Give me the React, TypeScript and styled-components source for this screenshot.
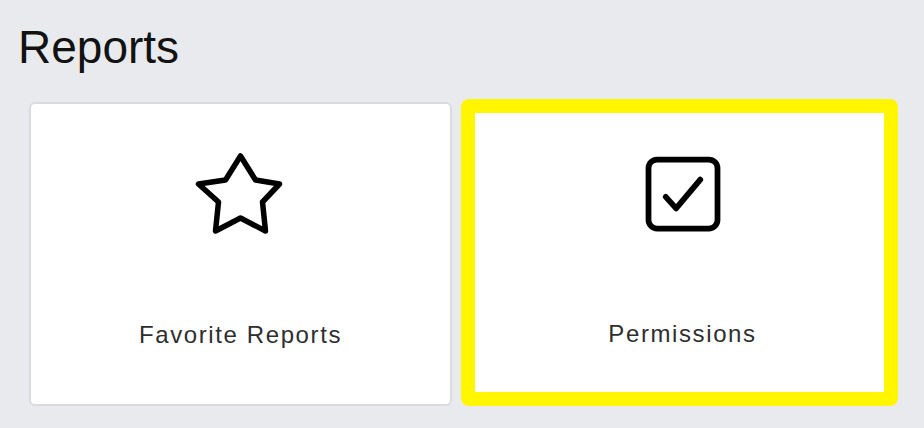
import React from "react";
import styled, { createGlobalStyle } from "styled-components";

const GlobalStyle = createGlobalStyle`
  html, body {
    margin: 0;
    padding: 0;
    background: #e9eaee;
    font-family: "Liberation Sans", Arial, Helvetica, sans-serif;
  }
  * { box-sizing: border-box; }
`;

const Page = styled.div`
  width: 924px;
  height: 428px;
  overflow: hidden;
  background: #e9eaee;
  padding: 21px 0 0 18px;
`;

const Title = styled.h1`
  margin: 0;
  font-size: 46px;
  line-height: 53px;
  font-weight: 400;
  color: #121212;
`;

const CardGrid = styled.div`
  display: grid;
  grid-template-columns: 423px 437px;
  column-gap: 9px;
  align-items: end;
  margin: 25px 0 0 11px;
`;

const Card = styled.button<{ $selected?: boolean }>`
  display: flex;
  flex-direction: column;
  align-items: center;
  background: #ffffff;
  border: ${(p) => (p.$selected ? "14px solid #fff600" : "2px solid #dbdbde")};
  border-radius: ${(p) => (p.$selected ? "8px" : "6px")};
  height: ${(p) => (p.$selected ? "307px" : "304px")};
  padding: ${(p) => (p.$selected ? "35px 0 0 6px" : "45px 0 0 0")};
  margin: 0;
  font: inherit;
  cursor: pointer;
`;

const IconBox = styled.svg<{ $shift?: number }>`
  width: 92px;
  height: 92px;
  display: block;
  flex: none;
  fill: none;
  stroke: #000;
  margin-left: ${(p) => p.$shift ?? 0}px;
`;

const Label = styled.span`
  margin-top: 80px;
  font-size: 24px;
  line-height: 28px;
  letter-spacing: 1.6px;
  color: #2e2e2e;
`;

const StarIcon = () => (
  <IconBox viewBox="0 0 92 92">
    <path
      d="M45.5 7L60.5 31L84.5 35L67.5 53L70.5 82L45.5 69L20.5 82L23.5 53L3.5 35L30.5 31Z"
      strokeWidth={5.5}
      strokeLinejoin="round"
    />
  </IconBox>
);

const CheckboxIcon = () => (
  <IconBox viewBox="0 0 512 512" $shift={1}>
    <path
      d="M352 176L217.6 336 160 272"
      strokeWidth={32}
      strokeLinecap="round"
      strokeLinejoin="round"
    />
    <rect x={64} y={64} width={384} height={384} rx={48} ry={48} strokeWidth={32} strokeLinejoin="round" />
  </IconBox>
);

export default function App() {
  return (
    <Page>
      <GlobalStyle />
      <Title>Reports</Title>
      <CardGrid>
        <Card>
          <StarIcon />
          <Label>Favorite Reports</Label>
        </Card>
        <Card $selected>
          <CheckboxIcon />
          <Label>Permissions</Label>
        </Card>
      </CardGrid>
    </Page>
  );
}
